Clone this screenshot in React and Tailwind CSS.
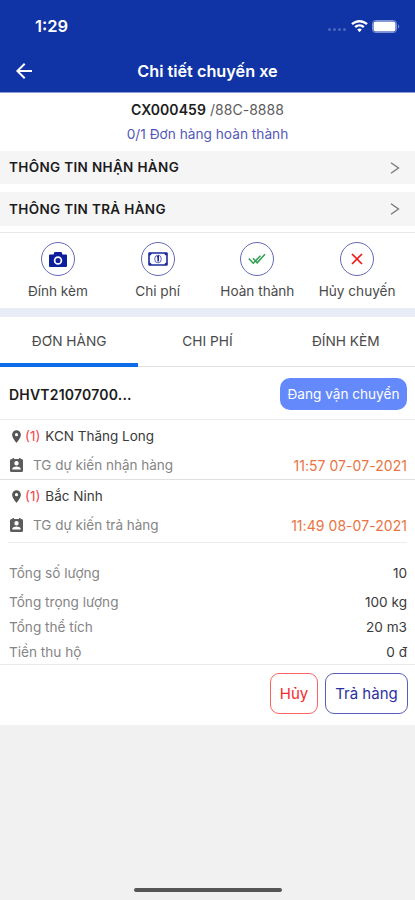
import clsx from "clsx";
import { MdArrowBack, MdLocationOn } from "react-icons/md";

function StatusIcons() {
  return (
    <div className="flex items-center">
      <div className="flex gap-[2px] mr-[5px] mt-[7px]">
        {[0, 1, 2, 3].map((dot) => (
          <span key={dot} className="w-[3px] h-[3px] rounded-full bg-[#4a67c0]" />
        ))}
      </div>
      <svg width="17" height="13" viewBox="0 0 17 13" fill="#fff">
        <path d="M8.5 0C5.3 0 2.4 1.3.2 3.3l1.6 1.8C3.6 3.4 5.9 2.4 8.5 2.4s4.9 1 6.7 2.7l1.6-1.8C14.6 1.3 11.7 0 8.5 0z" />
        <path d="M8.5 4.2c-2 0-3.8.8-5.2 2.1L5 8.1c.9-.9 2.1-1.5 3.5-1.5s2.6.6 3.5 1.5l1.7-1.8C12.3 5 10.5 4.2 8.5 4.2z" />
        <path d="M8.5 8.4c-.9 0-1.7.4-2.3 1l2.3 2.8 2.3-2.8c-.6-.6-1.4-1-2.3-1z" />
      </svg>
      <svg className="ml-1" width="28" height="13" viewBox="0 0 28 13">
        <rect x=".5" y=".5" width="24" height="12" rx="3" fill="none" stroke="#7c93d6" />
        <rect x="1.5" y="1.5" width="22" height="10" rx="2" fill="#fff" />
        <path d="M26 4.500v4c.8-.3 1.200-1 1.200-2s-.4-1.700-1.200-2z" fill="#7c93d6" />
      </svg>
    </div>
  );
}

function CameraIcon() {
  return (
    <svg width="18" height="15" viewBox="0 0 18 15">
      <path
        fill="#0e1f9c"
        d="M5.500 0h7l1 2.500H17a1 1 0 0 1 1 1V14a1 1 0 0 1-1 1H1a1 1 0 0 1-1-1V3.500a1 1 0 0 1 1-1h3.500z"
      />
      <circle cx="9" cy="8.500" r="3.400" fill="#0e1f9c" stroke="#fff" strokeWidth="1.700" />
    </svg>
  );
}

function CashIcon() {
  return (
    <svg width="20" height="14" viewBox="0 0 20 14" fill="none">
      <rect x="1" y="1" width="18" height="12" rx=".5" stroke="#1a2a9c" strokeWidth="1.600" />
      <path d="M1 1h2.600A2.600 2.600 0 0 1 1 3.600zM19 1h-2.600A2.600 2.600 0 0 0 19 3.600zM1 13h2.600A2.600 2.600 0 0 0 1 10.400zM19 13h-2.600A2.600 2.600 0 0 1 19 10.400z" fill="#1a2a9c" />
      <ellipse cx="10" cy="7" rx="3.300" ry="3.900" stroke="#1a2a9c" strokeWidth=".7" />
      <path d="M9 5.200l1.200-.8v5.200" stroke="#1a2a9c" strokeWidth="1.600" />
    </svg>
  );
}

function DoubleCheckIcon() {
  return (
    <svg width="18" height="12" viewBox="0 0 18 12" fill="none" stroke="#2fa04e" strokeWidth="1.500">
      <path d="M.8 5.500l4.400 4.700L12.500 2.800" />
      <path d="M5 5.300l4.200 4.500L17 1.200" />
    </svg>
  );
}

function CrossIcon() {
  return (
    <svg width="12" height="12" viewBox="0 0 12 12" fill="none" stroke="#f01818" strokeWidth="1.700">
      <path d="M1 1l10 10M11 1L1 11" />
    </svg>
  );
}

function ContactIcon() {
  return (
    <svg className="ml-[1px]" width="13" height="14" viewBox="0 0 13 14">
      <path
        fill="#5c5c5c"
        fillRule="evenodd"
        d="M2.500 0h1.500v1h5V0h1.500v1h1A1.500 1.500 0 0 1 13 2.500v10a1.500 1.500 0 0 1-1.500 1.500h-10A1.500 1.500 0 0 1 0 12.500v-10A1.500 1.500 0 0 1 1.500 1h1zM6.500 3a2.200 2.200 0 1 0 0 4.400 2.200 2.200 0 0 0 0-4.400zM2.300 11.500h8.400v-.8c0-1.400-2.800-2.100-4.200-2.100s-4.200.7-4.200 2.100z"
      />
    </svg>
  );
}

const sections = [
  { title: "THÔNG TIN NHẬN HÀNG", height: "h-[33px]" },
  { title: "THÔNG TIN TRẢ HÀNG", height: "h-[34px]" },
];

const actions = [
  { label: "Đính kèm", icon: <CameraIcon /> },
  { label: "Chi phí", icon: <CashIcon /> },
  { label: "Hoàn thành", icon: <DoubleCheckIcon /> },
  { label: "Hủy chuyến", icon: <CrossIcon /> },
];

const tabs = ["ĐƠN HÀNG", "CHI PHÍ", "ĐÍNH KÈM"];

const stops = [
  { name: "KCN Thăng Long", label: "TG dự kiến nhận hàng", time: "11:57 07-07-2021" },
  { name: "Bắc Ninh", label: "TG dự kiến trả hàng", time: "11:49 08-07-2021" },
];

const totals = [
  { label: "Tổng số lượng", value: "10", height: "h-[29px]" },
  { label: "Tổng trọng lượng", value: "100 kg", height: "h-[25px]" },
  { label: "Tổng thể tích", value: "20 m3", height: "h-[25px]" },
  { label: "Tiền thu hộ", value: "0 đ", height: "h-[24px]" },
];

function SectionRow({ section }) {
  return (
    <div className={clsx("flex items-center justify-between bg-[#f6f5f6] pl-[9px] pr-[15px]", section.height)}>
      <span className="text-[13.5px] tracking-[0.35px] font-semibold text-[#1c1c1c]">
        {section.title}
      </span>
      <svg width="10" height="12" viewBox="0 0 10 12" fill="none" stroke="#777" strokeWidth="1.300">
        <path d="M1 .8L8.500 6 1 11.200" />
      </svg>
    </div>
  );
}

function StopItem({ stop }) {
  return (
    <div className="h-[59px] pl-[9px] pr-[8px] pt-[5px]">
      <div className="flex items-center h-[22px] text-[13.5px]">
        <MdLocationOn className="w-[15px] h-[15px] text-[#555]" />
        <span className="text-[#f5434d] ml-[1px]">(1)</span>
        <span className="text-[#3a3a3a] ml-[5px]">{stop.name}</span>
      </div>
      <div className="flex items-center h-[22px] mt-[7px] text-[13.5px]">
        <ContactIcon />
        <span className="text-[#858585] ml-[10px]">{stop.label}</span>
        <span className="text-[#ea7442] ml-auto text-[14px] tracking-[0.05px]">{stop.time}</span>
      </div>
    </div>
  );
}

export default function App() {
  return (
    <div className="w-full h-[900px] bg-[#f1f1f1] font-['Inter',sans-serif] flex flex-col overflow-hidden whitespace-nowrap">
      <header className="bg-[#1033a6] h-[93px] border-b border-[#8f9fd4] shrink-0">
        <div className="h-[50px] flex items-center justify-between pl-[35px] pr-[15px] pt-[2px]">
          <span className="text-white font-semibold text-[16.5px]">1:29</span>
          <StatusIcons />
        </div>
        <div className="h-[42px] grid grid-cols-[60px_1fr_60px] items-center">
          <MdArrowBack className="w-6 h-6 text-white ml-[12px]" />
          <h1 className="text-white font-semibold text-[16.25px] text-center">
            Chi tiết chuyến xe
          </h1>
        </div>
      </header>

      <main className="bg-white h-[632px] shrink-0">
        <div className="h-[58px] text-center pt-[6px]">
          <div className="h-[22px] leading-[22px] text-[14px] tracking-[0.05px] text-[#5c5c5c]">
            <span className="font-semibold text-[#1c1c1c]">CX000459</span> /88C-8888
          </div>
          <div className="h-[25px] leading-[27px] text-[13.7px] text-[#5458ba]">0/1 Đơn hàng hoàn thành</div>
        </div>

        <div className="flex flex-col gap-2">
          {sections.map((section) => (
            <SectionRow key={section.title} section={section} />
          ))}
        </div>

        <div className="mt-[6px] border-t border-[#e8e8ea] h-[76px] grid grid-cols-4 px-[8px] pt-[9px]">
          {actions.map((action) => (
            <div key={action.label} className="flex flex-col items-center">
              <div className="w-[34px] h-[34px] rounded-full border border-[#6468b8] flex items-center justify-center">
                {action.icon}
              </div>
              <span className="text-[13.6px] leading-[18px] text-[#4a4a4a] mt-[6px]">{action.label}</span>
            </div>
          ))}
        </div>
        <div className="h-[9px] bg-[#e8ecf6]" />

        <div className="h-[50px] grid grid-cols-3 border-b border-[#e0e0e0]">
          {tabs.map((tab, index) => (
            <div
              key={tab}
              className={clsx(
                "h-[50px] flex items-center justify-center text-[13.7px] text-[#4a4a4a] pt-[3px] border-b-4",
                index === 0 ? "border-[#0d6ce8]" : "border-transparent"
              )}
            >
              {tab}
            </div>
          ))}
        </div>

        <div className="h-[53px] flex items-center justify-between pl-[9px] pr-[8px] pt-[2px] border-b border-[#ececec]">
          <span className="text-[14px] tracking-[0.2px] font-semibold text-[#1c1c1c]">DHVT21070700...</span>
          <span className="w-[127px] h-[32px] rounded-[10px] bg-[#6489fb] text-white text-[13.6px] flex items-center justify-center pt-[1px]">
            Đang vận chuyển
          </span>
        </div>

        <StopItem stop={stops[0]} />
        <div className="h-px bg-[#e0e0e0]" />
        <StopItem stop={stops[1]} />

        <div className="mx-[8px] mt-[3px] h-px bg-[#ececec]" />

        <div className="pl-[9px] pr-[8px] h-[122px] pt-[18px] border-b border-[#eaeaea]">
          {totals.map((total) => (
            <div key={total.label} className={clsx("flex justify-between text-[13.6px] leading-[24px]", total.height)}>
              <span className="text-[#858585]">{total.label}</span>
              <span className="text-[#3a3a3a]">{total.value}</span>
            </div>
          ))}
        </div>

        <div className="flex justify-end gap-[7px] pt-[8px] pr-[7px]">
          <button className="w-[48px] h-[41px] rounded-[9px] border border-[#fb6262] text-[#f52a2a] text-[15px] pt-[1px]">
            Hủy
          </button>
          <button className="w-[83px] h-[41px] rounded-[9px] border border-[#5a5eb8] text-[#2c319f] text-[15px] pt-[1px]">
            Trả hàng
          </button>
        </div>
      </main>

      <div className="mt-auto mb-[8px] mx-auto w-[148px] h-[4px] rounded-full bg-[#555]" />
    </div>
  );
}
